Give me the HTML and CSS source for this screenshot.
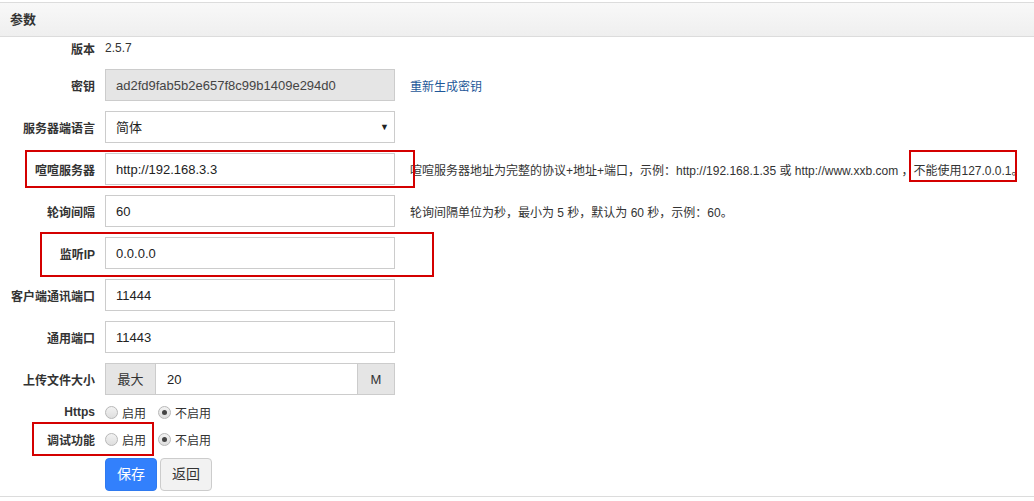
FILE: index.html
```html
<!DOCTYPE html>
<html lang="zh-CN">
<head>
<meta charset="utf-8">
<title>参数</title>
<link rel="stylesheet" href="styles.css">
</head>
<body>
<div class="page">
  <div class="panel">
    <div class="panel-heading">参数</div>
    <div class="panel-body">
      <div class="row row-static">
        <div class="label">版本</div>
        <div class="static">2.5.7</div>
      </div>
      <div class="row">
        <div class="label">密钥</div>
        <div class="control input readonly">ad2fd9fab5b2e657f8c99b1409e294d0</div>
        <a class="link" href="#">重新生成密钥</a>
      </div>
      <div class="row">
        <div class="label">服务器端语言</div>
        <div class="control input select">简体<span class="caret">▼</span></div>
      </div>
      <div class="row">
        <div class="label">喧喧服务器</div>
        <div class="control input">http://192.168.3.3</div>
        <div class="hint">喧喧服务器地址为完整的协议+地址+端口，示例：http://192.168.1.35 或 http://www.xxb.com ，不能使用127.0.0.1。</div>
      </div>
      <div class="row">
        <div class="label">轮询间隔</div>
        <div class="control input">60</div>
        <div class="hint">轮询间隔单位为秒，最小为 5 秒，默认为 60 秒，示例：60。</div>
      </div>
      <div class="row">
        <div class="label">监听IP</div>
        <div class="control input">0.0.0.0</div>
      </div>
      <div class="row">
        <div class="label">客户端通讯端口</div>
        <div class="control input">11444</div>
      </div>
      <div class="row">
        <div class="label">通用端口</div>
        <div class="control input">11443</div>
      </div>
      <div class="row">
        <div class="label">上传文件大小</div>
        <div class="control group">
          <span class="addon addon-left">最大</span>
          <span class="group-input">20</span>
          <span class="addon addon-right">M</span>
        </div>
      </div>
      <div class="row row-radio">
        <div class="label label-en">Https</div>
        <div class="radios">
          <span class="radio"></span><span class="radio-text">启用</span>
          <span class="radio checked"></span><span class="radio-text">不启用</span>
        </div>
      </div>
      <div class="row row-radio">
        <div class="label">调试功能</div>
        <div class="radios">
          <span class="radio"></span><span class="radio-text">启用</span>
          <span class="radio checked"></span><span class="radio-text">不启用</span>
        </div>
      </div>
      <div class="row row-buttons">
        <div class="label"></div>
        <div class="buttons">
          <span class="btn btn-primary">保存</span>
          <span class="btn btn-default">返回</span>
        </div>
      </div>
    </div>
  </div>
  <div class="mark mark-server"></div>
  <div class="mark mark-ip"></div>
  <div class="mark mark-local"></div>
  <div class="mark mark-debug"></div>
</div>
</body>
</html>
```
FILE: styles.css
```css
* { box-sizing: border-box; }
html, body { margin: 0; padding: 0; background: #fff; }
body {
  font-family: "Liberation Sans", "Noto Sans CJK SC", sans-serif;
  font-size: 12px;
  color: #333;
}
.page { position: relative; width: 1034px; height: 501px; padding-top: 2px; }
.panel {
  border-top: 1px solid #dcdcdc;
  border-bottom: 1px solid #dcdcdc;
}
.panel-heading {
  height: 34px;
  line-height: 34px;
  padding-left: 10px;
  font-size: 13px;
  font-weight: bold;
  color: #333;
  background: linear-gradient(#f8f8f8, #efefef);
  border-bottom: 1px solid #dcdcdc;
}
.panel-body { padding-bottom: 5px; }
.row { display: flex; align-items: center; height: 32px; margin-top: 10px; }
.row-static { height: 22px; margin-top: 0; }
.label {
  width: 95px;
  flex: none;
  text-align: right;
  font-weight: bold;
  font-size: 12px;
  color: #333;
}
.label-en { font-size: 12px; }
.static { margin-left: 10px; font-size: 12px; color: #333; }
.control { margin-left: 10px; width: 290px; height: 32px; flex: none; }
.input {
  border: 1px solid #ccc;
  background: #fff;
  padding-left: 10px;
  padding-top: 1px;
  font-size: 13px;
  line-height: 30px;
  color: #222;
}
.readonly { background: #e5e5e5; color: #444; }
.select { position: relative; padding-left: 10px; }
.caret {
  position: absolute;
  right: 5px;
  top: 0;
  font-size: 9px;
  color: #222;
}
.link { margin-left: 15px; color: #1e5799; text-decoration: none; font-size: 12px; }
.hint { margin-left: 15px; font-size: 12px; color: #333; white-space: nowrap; }
.group { display: flex; border: 1px solid #ccc; }
.addon {
  background: #e5e5e5;
  text-align: center;
  line-height: 30px;
  padding-top: 1px;
  font-size: 13px;
  color: #333;
}
.addon-left { width: 50px; border-right: 1px solid #ccc; }
.addon-right { width: 37px; border-left: 1px solid #ccc; }
.group-input { flex: 1; padding-left: 11px; padding-top: 1px; line-height: 30px; font-size: 13px; color: #222; }
.row-radio { height: 20px; margin-top: 7px; }
.radios { margin-left: 10px; display: flex; align-items: center; }
.radio {
  width: 13px;
  height: 13px;
  border-radius: 50%;
  border: 1px solid #b8b8b8;
  background: linear-gradient(#f2f2f2, #dedede);
  position: relative;
  flex: none;
}
.radio.checked::after {
  content: "";
  position: absolute;
  left: 3px;
  top: 3px;
  width: 5px;
  height: 5px;
  border-radius: 50%;
  background: #444;
}
.radio-text { margin-left: 4px; margin-right: 12px; font-size: 12px; color: #333; }
.row-buttons { height: 33px; margin-top: 9px; }
.buttons { margin-left: 10px; display: flex; gap: 3px; }
.btn {
  display: inline-block;
  width: 52px;
  height: 33px;
  line-height: 31px;
  text-align: center;
  font-size: 14px;
  border-radius: 4px;
  border: 1px solid transparent;
}
.btn-primary { background: #3280fc; border-color: #2f7af0; color: #fff; }
.btn-default { background: #f2f2f2; border-color: #ccc; color: #333; }
.mark { position: absolute; border: 2px solid #d40000; }
.mark-server { left: 25px; top: 150px; width: 390px; height: 38px; }
.mark-ip { left: 40px; top: 232px; width: 394px; height: 45px; }
.mark-local { left: 909px; top: 150px; width: 108px; height: 32px; }
.mark-debug { left: 32px; top: 422px; width: 122px; height: 34px; }
```
